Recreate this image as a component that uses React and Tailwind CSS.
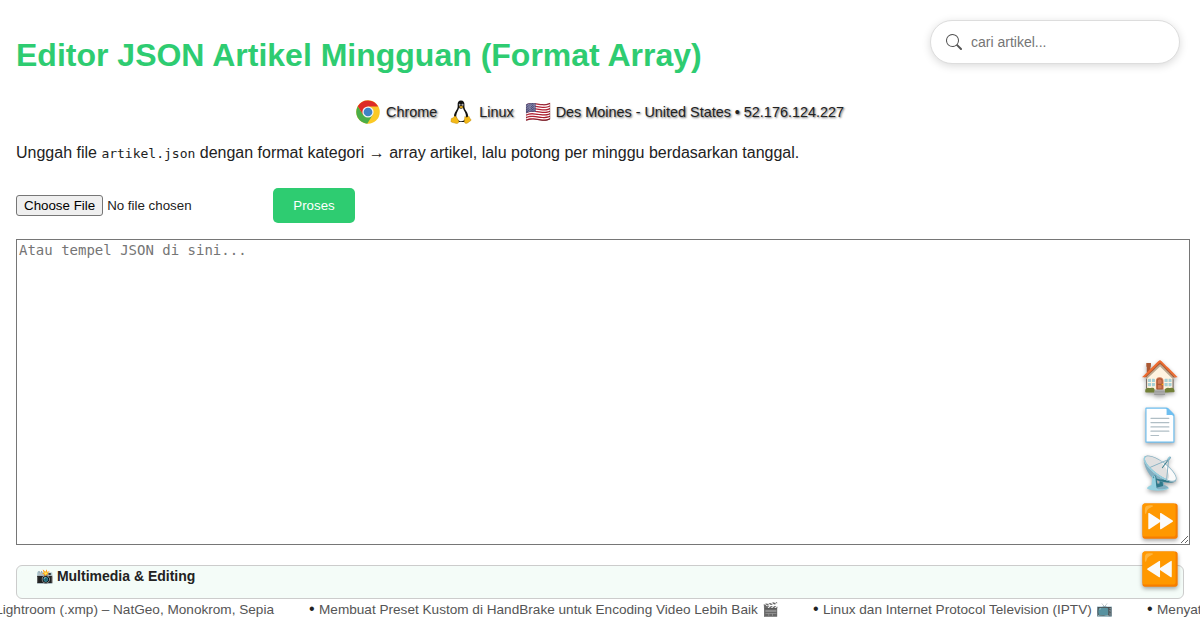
function ChromeLogo() {
  return (
    <svg viewBox="0 0 48 48" className="h-6 w-6 shrink-0">
      <circle cx="24" cy="24" r="23.5" fill="#fbc926" />
      <path d="M3.6 12.3 A23.5 23.5 0 0 0 22.5 47.4 L33.8 29.2 L24 24 L14.2 29.6Z" fill="#4aae48" />
      <path d="M3.6 12.3 L14.2 29.6 L24 13 L44.3 13 A23.5 23.5 0 0 0 3.6 12.3Z" fill="#de2c25" />
      <circle cx="24" cy="24" r="11.2" fill="#f4f4f4" />
      <circle cx="24" cy="24" r="8.7" fill="#3f83c5" />
    </svg>
  );
}

function Tux() {
  return (
    <svg viewBox="0 0 48 48" className="h-6 w-6 shrink-0">
      <path d="M24 0.8c-5 0-7 3.500-6.700 8.700.3 5.500-.3 7.500-3.300 12C10.500 26.500 8.500 32 11 38l6 6h14l6-6c2.800-6 .3-12-3-16.500-3.200-4.500-3.300-7-3.100-12C31.100 4.300 29 .8 24 .8z" fill="#111" />
      <path d="M20 16c2.500 2 5.500 2 8 0 1 4.500 5 8.500 5.700 14 .7 6-2.700 12.500-9 12.500S14 37 14.500 31C15 25 19 21 20 16z" fill="#fff" />
      <ellipse cx="21.3" cy="9.700" rx="1.700" ry="2.300" fill="#ddd" />
      <ellipse cx="27" cy="9.700" rx="1.900" ry="2.400" fill="#ddd" />
      <circle cx="21.800" cy="10" r="1" fill="#111" />
      <circle cx="26.500" cy="10" r="1" fill="#111" />
      <path d="M20 13.500c2-2 6-2.300 8.500 0-1 2-2.500 3-4 3s-3.700-1.300-4.500-3z" fill="#dca318" />
      <path d="M11.500 32c2.500-.5 5 5 7.500 8.500 2.500 4-1 7.500-5 6.300-3.500-1-7-1.500-9.500-2.800-1.500-1 .2-3.500-.2-6 0-2 2.500-1.500 4-2.500 1.500-1 1.700-3 3.200-3.500z" fill="#f4b917" stroke="#a97a0c" strokeWidth=".7" />
      <path d="M31.500 33c2 2 6 1.500 7.500-.5 2.500 0 1.500 3.500 3.300 5 3 2 3 3-.3 4.800-3 1.700-5 5-8.500 4.500-5-1-2-9.500-2-13.800z" fill="#f4b917" stroke="#a97a0c" strokeWidth=".7" />
    </svg>
  );
}

function SearchIcon() {
  return (
    <svg viewBox="0 0 16 16" fill="#555" className="h-4 w-4 shrink-0">
      <path d="M11.742 10.344a6.500 6.500 0 1 0-1.397 1.398h-.001q.044.06.098.115l3.850 3.850a1 1 0 0 0 1.415-1.414l-3.850-3.850a1 1 0 0 0-.115-.1zM12 6.500a5.500 5.500 0 1 1-11 0 5.500 5.500 0 0 1 11 0" />
    </svg>
  );
}

const actions = ["🏠", "📄", "📡", "⏩", "⏪"];

function TickerItem({ children, className }) {
  return (
    <span className={className}>
      <span className="mr-1 inline-block w-[6px] text-[16px] leading-4 text-[#222]">•</span>
      {children}
    </span>
  );
}

export default function App() {
  return (
    <div className="relative h-[630px] w-[1200px] overflow-hidden bg-white font-['Liberation_Sans',Arial,sans-serif] text-base text-[#222]">
      <main className="flex flex-col pl-4">
        <h1 className="mt-[37px] h-9 text-[32px] leading-9 font-bold text-[#2ecc71]">
          Editor JSON Artikel Mingguan (Format Array)
        </h1>

        <div className="mt-[26px] mr-4 flex h-[26px] items-center justify-center gap-3 text-[14.4px] [text-shadow:1px_1px_2px_rgba(0,0,0,0.6)]">
          <span className="flex items-center gap-1.5"><ChromeLogo /><span className="pt-0.5">Chrome</span></span>
          <span className="flex items-center gap-1.5"><Tux /><span className="pt-0.5">Linux</span></span>
          <span className="flex items-center gap-1.5">
            <span className="-ml-px w-[25px] text-[21px] leading-6 [text-shadow:none]">🇺🇸</span>
            <span className="pt-0.5">Des Moines - United States • 52.176.124.227</span>
          </span>
        </div>

        <p className="mt-4 h-6 leading-6">
          Unggah file <code className="font-['DejaVu_Sans_Mono',monospace] text-[13px]">artikel.json</code> dengan format kategori → array artikel, lalu potong per minggu berdasarkan tanggal.
        </p>

        <div className="mt-[23px] flex h-[35px] items-center text-[13.333px]">
          <div className="flex w-[257px] items-center gap-1">
            <button className="h-[21px] rounded-[3px] border border-[#767676] bg-[#efefef] px-[7px] leading-[19px] text-black">Choose File</button>
            <span>No file chosen</span>
          </div>
          <button className="h-[35px] w-[82px] rounded-[5px] bg-[#2ecc71] text-white">Proses</button>
        </div>

        <textarea
          placeholder="Atau tempel JSON di sini..."
          className="mt-4 block h-[306px] w-[1174px] resize border border-[#767676] bg-white p-0.5 font-['DejaVu_Sans_Mono',monospace] text-[14px] leading-[17px] placeholder:text-[#757575]"
        />

        <section className="mt-5 mr-4 h-[34px] rounded-[6px] border border-[#ccc] bg-[#f4fcf8] px-[19px] text-[14px] leading-[21px] font-bold">
          📸 Multimedia &amp; Editing
        </section>
      </main>

      <footer className="flex h-[22px] items-center overflow-hidden text-[13.6px] whitespace-nowrap text-[#555]">
        <div className="flex w-[274px] shrink-0 justify-end">
          <span>Lightroom (.xmp) – NatGeo, Monokrom, Sepia</span>
        </div>
        <TickerItem className="ml-[35px] w-[470px] shrink-0">Membuat Preset Kustom di HandBrake untuk Encoding Video Lebih Baik <span className="opacity-80">🎬</span></TickerItem>
        <TickerItem className="ml-[34px] w-[300px] shrink-0">Linux dan Internet Protocol Television (IPTV) <span className="opacity-80">📺</span></TickerItem>
        <TickerItem className="ml-[34px] shrink-0">Menyatukan</TickerItem>
      </footer>

      <label className="absolute top-5 right-5 flex h-11 w-[250px] items-center gap-[9px] rounded-full border border-[#ddd] bg-white pl-[15px] shadow-[0_2px_8px_rgba(0,0,0,0.15)]">
        <SearchIcon />
        <input placeholder="cari artikel..." className="w-[180px] text-[14px] outline-none placeholder:text-[#757575]" />
      </label>

      <nav className="absolute top-[353px] right-5 flex w-10 flex-col text-[32px]">
        {actions.map((icon) => (
          <button key={icon} className="flex h-12 items-center justify-center leading-none drop-shadow-[0_2px_2px_rgba(0,0,0,0.35)]">{icon}</button>
        ))}
      </nav>
    </div>
  );
}
